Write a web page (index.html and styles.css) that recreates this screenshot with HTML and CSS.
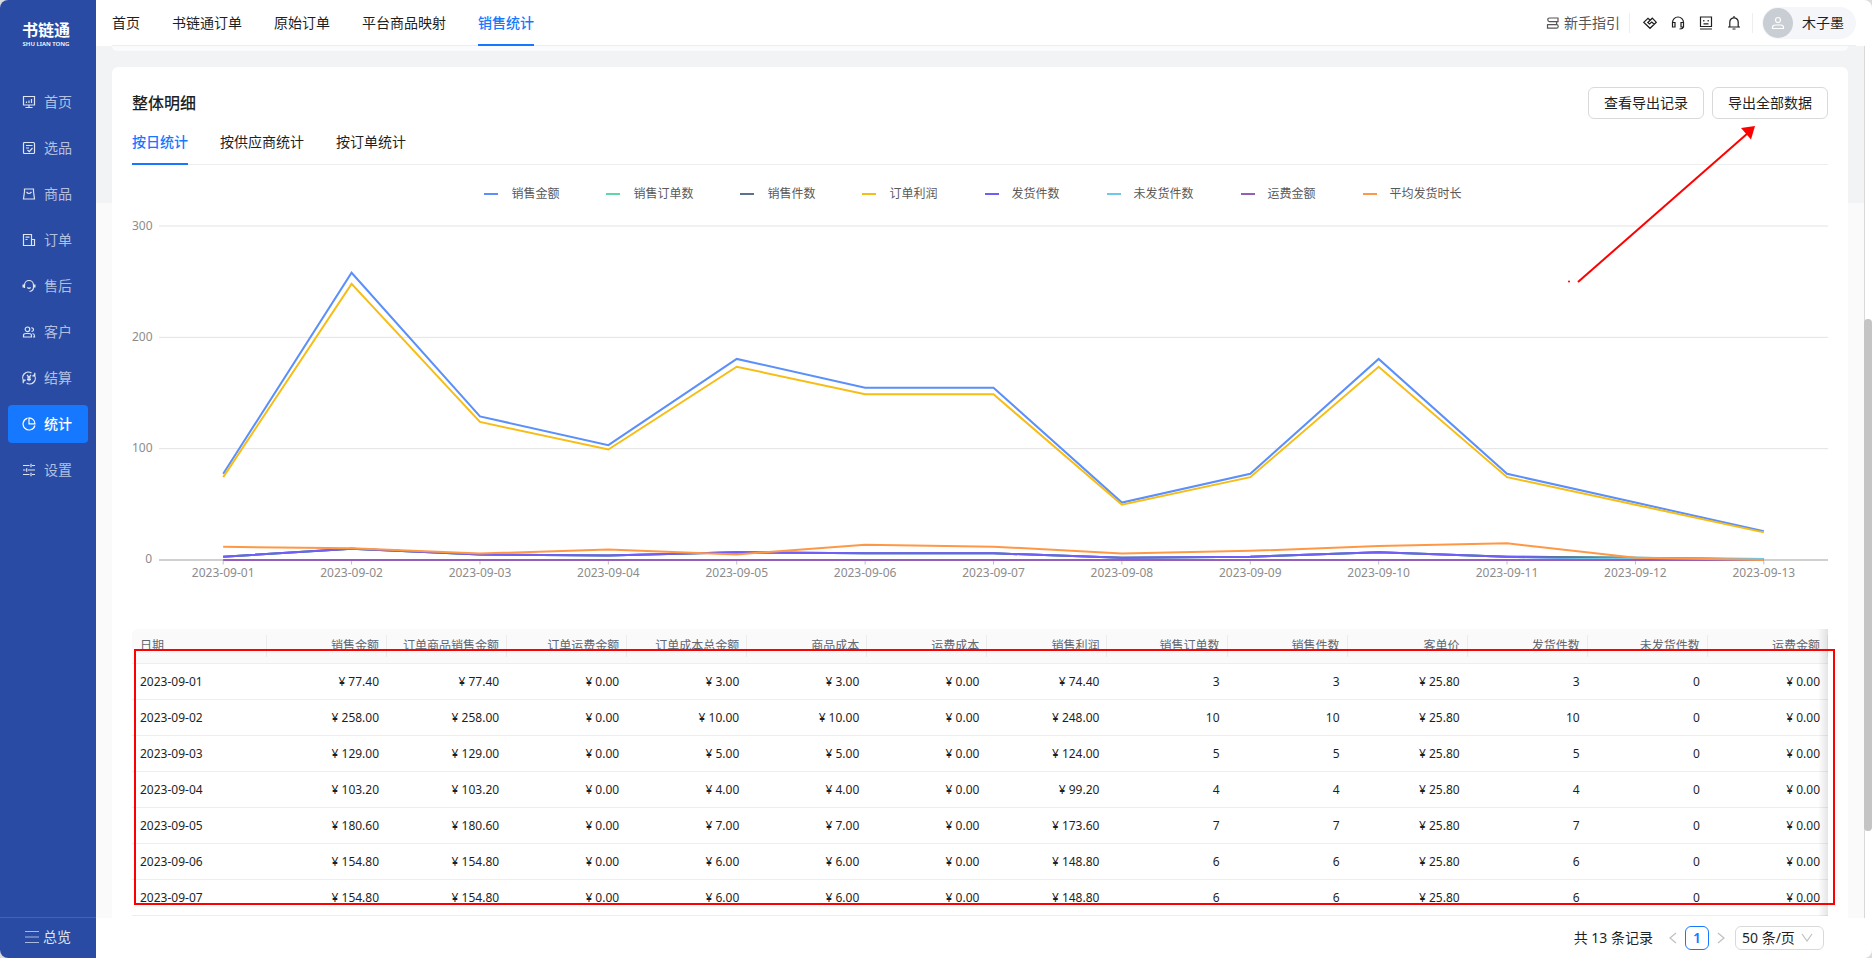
FILE: index.html
```html
<!DOCTYPE html>
<html lang="zh-CN">
<head>
<meta charset="utf-8">
<title>销售统计</title>
<link rel="stylesheet" href="styles.css">
</head>
<body>
<div class="app">
  <aside class="sidebar">
    <div class="logo">
      <strong class="logo-name">书链通</strong>
      <span class="logo-sub">SHU LIAN TONG</span>
    </div>
    <nav class="menu">
      <a class="menu-item" href="#"><svg class="icon" viewBox="0 0 14 14"><path d="M1.500 1.500h11v8.500h-11zM7 10v2.300M3.500 12.500h7M4.500 8V6.500M7 8V5.500M9.500 8V4"/></svg>首页</a>
      <a class="menu-item" href="#"><svg class="icon" viewBox="0 0 14 14"><rect x="1.500" y="1.500" width="11" height="11" rx="1"/><path d="M4 4.500h6.500M4 7h3M5.500 9l1.800 1.700L10.500 7"/></svg>选品</a>
      <a class="menu-item" href="#"><svg class="icon" viewBox="0 0 14 14"><path d="M2.500 2h9v2.500l1 7.500h-11l1-7.500zM4.500 5Q7 8 9.500 5"/></svg>商品</a>
      <a class="menu-item" href="#"><svg class="icon" viewBox="0 0 14 14"><path d="M1.500 1.500h8v11h-8zM9.500 6.500h3v6h-3M3.500 4.200h4M3.500 6.500h2"/></svg>订单</a>
      <a class="menu-item" href="#"><svg class="icon" viewBox="0 0 14 14"><path d="M2.500 9V6a4.500 4.500 0 0 1 9 0v2.500c0 2-1.500 3.500-4 4M5.300 8.500Q7 10 8.700 8.500"/><path class="thick" d="M1.500 5.500v3M12.500 5.500v3"/></svg>售后</a>
      <a class="menu-item" href="#"><svg class="icon" viewBox="0 0 14 14"><circle cx="5.500" cy="4.300" r="2.300"/><path d="M1.500 12v-1.500Q1.500 8.500 4 8.500h3q2.500 0 2.500 2V12zM9.300 3a1.700 1.700 0 1 1 .2 3.300M10.500 8.500q2 .3 2 2.500v1h-1.500"/></svg>客户</a>
      <a class="menu-item" href="#"><svg class="icon" viewBox="0 0 14 14"><path d="M2.300 10.500A5.600 5.600 0 0 1 9.500 2M11.700 3.500A5.600 5.600 0 0 1 4.500 12M12.800 1.800v3h-2.500M1.200 12.200v-3h2.500M5 4l2 2.300L9 4M7 6.300v4M5 7h4M5 8.700h4"/></svg>结算</a>
      <a class="menu-item active" href="#"><svg class="icon" viewBox="0 0 14 14"><path d="M5.500 1.200A6 6 0 1 0 12.900 8.500M7 .900a6 6 0 0 1 6 6H7z"/></svg>统计</a>
      <a class="menu-item" href="#"><svg class="icon" viewBox="0 0 14 14"><path d="M1 2.500h6.500M10 2.500h3M1 7h2.500M6 7h7M1 11.500h6.500M10 11.500h3M9 .800v3.400M4.700 5.300v3.400M9 9.800v3.400"/></svg>设置</a>
    </nav>
    <button class="overview" type="button"><svg class="icon" viewBox="0 0 14 14"><path d="M0 1.500h14M0 7h14M0 12.500h14"/></svg>总览</button>
  </aside>

  <div class="page">
    <header class="header">
      <nav class="topnav">
        <a href="#">首页</a>
        <a href="#">书链通订单</a>
        <a href="#">原始订单</a>
        <a href="#">平台商品映射</a>
        <a class="active" href="#">销售统计</a>
      </nav>
      <div class="tools">
        <a class="guide" href="#"><svg class="icon" viewBox="0 0 14 14"><path d="M12.500 2H3.500Q1.800 2 1.800 3.800T3.500 5.600H12V2M1.200 8.600H10.500Q12.200 8.600 12.200 10.400T10.500 12.200H1.500V8.600M10 5.600Q11.500 7 10 8.600"/></svg>新手指引</a>
        <span class="divider"></span>
        <div class="tool-icons">
          <button type="button" aria-label="合作"><svg class="icon" viewBox="0 0 14 14"><path d="M7.200 4.200L5 2.200.7 6.300 7 12.300l6.300-6L9.300 2.200 4.800 6.500l1.700 1.500 2.300-2 2.400 2.300"/></svg></button>
          <button type="button" aria-label="客服"><svg class="icon" viewBox="0 0 14 14"><path d="M1.500 8V6.500a5.500 5.500 0 0 1 11 0V10q0 3-4 3M1.500 6.500H4v4.500H1.500zM10 6.500h2.500V11H10z"/></svg></button>
          <button type="button" aria-label="机器人"><svg class="icon" viewBox="0 0 14 14"><path d="M1.500 1h11v9.500h-11zM1 13h12M4.800 4v1.500M9.200 4v1.500M4.500 7.800h5"/></svg></button>
          <button type="button" aria-label="通知"><svg class="icon" viewBox="0 0 14 14"><path d="M2.800 11V6a4.200 4.200 0 0 1 8.400 0v5M1 11h12M7 0v1.800M5.500 13h3"/></svg></button>
        </div>
        <span class="divider"></span>
        <button class="user" type="button">
          <span class="avatar"><svg class="icon" viewBox="0 0 14 14"><circle cx="7" cy="4" r="2.500"/><path d="M1.500 12.500v-1Q1.500 9 4.500 9h5q3 0 3 2.500v1z"/></svg></span>
          木子墨
        </button>
      </div>
    </header>

    <div class="body">
      <main class="content">
        <div class="card-tail"></div>
        <section class="card">
          <div class="card-head">
            <h2>整体明细</h2>
            <div class="actions">
              <button type="button">查看导出记录</button>
              <button type="button">导出全部数据</button>
            </div>
          </div>
          <nav class="tabs">
            <a class="active" href="#">按日统计</a>
            <a href="#">按供应商统计</a>
            <a href="#">按订单统计</a>
          </nav>

          <div class="legend">
            <span class="c-amount">销售金额</span>
            <span class="c-orders">销售订单数</span>
            <span class="c-pieces">销售件数</span>
            <span class="c-profit">订单利润</span>
            <span class="c-shipped">发货件数</span>
            <span class="c-unshipped">未发货件数</span>
            <span class="c-freight">运费金额</span>
            <span class="c-hours">平均发货时长</span>
          </div>

          <div class="chart">
            <div class="y-axis"><span>300</span><span>200</span><span>100</span><span>0</span></div>
            <svg class="plot" viewBox="0 0 1300 300" preserveAspectRatio="none">
              <path class="grid-line" d="M0 0H1300M0 100H1300M0 200H1300"/>
              <path class="base-line" d="M0 300H1300"/>
              <path class="tick" d="M50 300v4M150 300v4M250 300v4M350 300v4M450 300v4M550 300v4M650 300v4M750 300v4M850 300v4M950 300v4M1050 300v4M1150 300v4M1250 300v4"/>
              <polyline class="c-amount" points="50,222.6 150,42 250,171 350,196.8 450,119.4 550,145.2 650,145.2 750,248.4 850,222.6 950,119.4 1050,222.6 1150,248.4 1250,274.2"/>
              <polyline class="c-orders" points="50,297 150,290 250,295 350,296 450,293 550,294 650,294 750,298 850,297 950,293 1050,297 1150,298 1250,299"/>
              <polyline class="c-pieces" points="50,297 150,290 250,295 350,296 450,293 550,294 650,294 750,298 850,297 950,293 1050,297 1150,298 1250,299.500"/>
              <polyline class="c-profit" points="50,225.6 150,52 250,176 350,200.8 450,126.4 550,151.2 650,151.2 750,250.4 850,225.6 950,126.4 1050,225.6 1150,250.4 1250,275.2"/>
              <polyline class="c-shipped" points="50,297 150,290 250,295 350,296 450,293 550,294 650,294 750,298 850,297 950,293 1050,297 1150,300 1250,300"/>
              <polyline class="c-unshipped" points="50,300 1050,300 1150,298.500 1250,299"/>
              <polyline class="c-freight" points="50,300 1250,300"/>
              <polyline class="c-hours" points="50,288.200 150,289.500 250,294.200 350,290.500 450,295 550,286.200 650,288 750,294.200 850,291.800 950,287.500 1050,285 1150,298 1250,300"/>
            </svg>
            <div class="x-axis">
              <span>2023-09-01</span><span>2023-09-02</span><span>2023-09-03</span><span>2023-09-04</span><span>2023-09-05</span><span>2023-09-06</span><span>2023-09-07</span><span>2023-09-08</span><span>2023-09-09</span><span>2023-09-10</span><span>2023-09-11</span><span>2023-09-12</span><span>2023-09-13</span>
            </div>
          </div>

          <div class="table-wrap">
            <table>
              <thead>
                <tr><th>日期</th><th>销售金额</th><th>订单商品销售金额</th><th>订单运费金额</th><th>订单成本总金额</th><th>商品成本</th><th>运费成本</th><th>销售利润</th><th>销售订单数</th><th>销售件数</th><th>客单价</th><th>发货件数</th><th>未发货件数</th><th>运费金额</th></tr>
              </thead>
              <tbody>
                <tr><td>2023-09-01</td><td>¥ 77.40</td><td>¥ 77.40</td><td>¥ 0.00</td><td>¥ 3.00</td><td>¥ 3.00</td><td>¥ 0.00</td><td>¥ 74.40</td><td>3</td><td>3</td><td>¥ 25.80</td><td>3</td><td>0</td><td>¥ 0.00</td></tr>
                <tr><td>2023-09-02</td><td>¥ 258.00</td><td>¥ 258.00</td><td>¥ 0.00</td><td>¥ 10.00</td><td>¥ 10.00</td><td>¥ 0.00</td><td>¥ 248.00</td><td>10</td><td>10</td><td>¥ 25.80</td><td>10</td><td>0</td><td>¥ 0.00</td></tr>
                <tr><td>2023-09-03</td><td>¥ 129.00</td><td>¥ 129.00</td><td>¥ 0.00</td><td>¥ 5.00</td><td>¥ 5.00</td><td>¥ 0.00</td><td>¥ 124.00</td><td>5</td><td>5</td><td>¥ 25.80</td><td>5</td><td>0</td><td>¥ 0.00</td></tr>
                <tr><td>2023-09-04</td><td>¥ 103.20</td><td>¥ 103.20</td><td>¥ 0.00</td><td>¥ 4.00</td><td>¥ 4.00</td><td>¥ 0.00</td><td>¥ 99.20</td><td>4</td><td>4</td><td>¥ 25.80</td><td>4</td><td>0</td><td>¥ 0.00</td></tr>
                <tr><td>2023-09-05</td><td>¥ 180.60</td><td>¥ 180.60</td><td>¥ 0.00</td><td>¥ 7.00</td><td>¥ 7.00</td><td>¥ 0.00</td><td>¥ 173.60</td><td>7</td><td>7</td><td>¥ 25.80</td><td>7</td><td>0</td><td>¥ 0.00</td></tr>
                <tr><td>2023-09-06</td><td>¥ 154.80</td><td>¥ 154.80</td><td>¥ 0.00</td><td>¥ 6.00</td><td>¥ 6.00</td><td>¥ 0.00</td><td>¥ 148.80</td><td>6</td><td>6</td><td>¥ 25.80</td><td>6</td><td>0</td><td>¥ 0.00</td></tr>
                <tr><td>2023-09-07</td><td>¥ 154.80</td><td>¥ 154.80</td><td>¥ 0.00</td><td>¥ 6.00</td><td>¥ 6.00</td><td>¥ 0.00</td><td>¥ 148.80</td><td>6</td><td>6</td><td>¥ 25.80</td><td>6</td><td>0</td><td>¥ 0.00</td></tr>
              </tbody>
            </table>
            <div class="table-mark"></div>
          </div>

          <svg class="arrow-mark" viewBox="0 0 192 162"><path class="arrow-line" d="M12 158L182 9"/><path class="arrow-head" d="M189 2l-14 2 10 11.500z"/><circle class="arrow-head" cx="3" cy="157.500" r="1"/></svg>
        </section>
      </main>
      <div class="scrollbar"><span></span></div>
    </div>

    <footer class="pager">
      <span class="total">共 13 条记录</span>
      <button class="step" type="button" aria-label="上一页"><svg class="icon" viewBox="0 0 10 12"><path d="M8 1L2 6l6 5"/></svg></button>
      <button class="current" type="button">1</button>
      <button class="step" type="button" aria-label="下一页"><svg class="icon" viewBox="0 0 10 12"><path d="M2 1l6 5-6 5"/></svg></button>
      <span class="size">
        <select aria-label="每页条数"><option>50 条/页</option></select>
        <svg class="icon" viewBox="0 0 12 10"><path d="M1 1l5 7 5-7"/></svg>
      </span>
    </footer>
  </div>
</div>
</body>
</html>
```

FILE: styles.css
```css
* { box-sizing: border-box; }

body {
  margin: 0;
  background: #dcdcdc;
  color: #1f1f1f;
  font: 14px/22px "Noto Sans", "Noto Sans CJK SC", sans-serif;
}

a { color: inherit; text-decoration: none; }

button {
  margin: 0;
  padding: 0;
  border: 0;
  background: none;
  color: inherit;
  font: inherit;
}

.icon {
  width: 14px;
  height: 14px;
  flex: none;
  fill: none;
  stroke: currentColor;
  stroke-width: 1.2;
}

.icon .thick { stroke-width: 2; }

.app {
  display: flex;
  height: 100vh;
  overflow: hidden;
  border-radius: 8px;
  background: #fff;
}

/* Sidebar */
.sidebar {
  display: flex;
  flex: none;
  flex-direction: column;
  width: 96px;
  background: #294ba3;
  color: #b3c0e0;
}

.logo {
  display: flex;
  flex-direction: column;
  align-items: center;
  height: 83px;
  padding: 20px 4px 0 0;
  color: #fff;
}

.logo-name { font-size: 16px; line-height: 20px; }
.logo-sub { font-size: 6px; line-height: 8px; font-weight: 600; white-space: nowrap; }

.menu {
  display: flex;
  flex: 1;
  flex-direction: column;
  gap: 8px;
  padding: 0 8px;
}

.menu-item {
  display: flex;
  align-items: center;
  gap: 8px;
  height: 38px;
  padding-left: 14px;
  border-radius: 4px;
}

.menu-item .icon { color: #dfe4f1; }
.menu-item.active { background: #1677ff; color: #fff; font-weight: 500; }
.menu-item.active .icon { color: #fff; }

.overview {
  display: flex;
  align-items: center;
  justify-content: center;
  gap: 4px;
  height: 41px;
  padding-bottom: 2px;
  border-top: 1px solid #4563b0;
  color: #dfe4f1;
}

.overview .icon { color: #a9b7db; }

/* Header */
.page {
  display: flex;
  flex: 1;
  flex-direction: column;
  min-width: 0;
}

.header {
  display: flex;
  flex: none;
  justify-content: space-between;
  height: 46px;
  margin: 0 16px;
  border-bottom: 1px solid #eee;
}

.topnav { display: flex; gap: 32px; height: 46px; }
.topnav a { height: 46px; line-height: 46px; }
.topnav .active { border-bottom: 2px solid #1677ff; color: #1677ff; font-weight: 500; }

.tools { display: flex; align-items: center; }
.guide { display: flex; align-items: center; gap: 4px; color: #555; }
.divider { width: 1px; height: 20px; margin: 0 9px; background: #eee; }
.tool-icons { display: flex; gap: 14px; padding: 0 2px 0 4px; }
.tool-icons button { display: flex; }

.user {
  display: flex;
  align-items: center;
  gap: 9px;
  height: 32px;
  padding: 0 12px 0 1px;
  border-radius: 16px;
  background: #f5f6f9;
}

.avatar {
  display: flex;
  align-items: center;
  justify-content: center;
  width: 30px;
  height: 30px;
  border-radius: 50%;
  background: #c9cdd4;
  color: #fff;
}

/* Scrolling area */
.body { display: flex; flex: 1; min-height: 0; }

.content {
  flex: 1;
  min-width: 0;
  overflow: hidden;
  padding: 0 16px;
  background: linear-gradient(#f2f3f5 157px, #fafafa 157px);
}

.card-tail {
  height: 5px;
  margin-bottom: 16px;
  border-radius: 0 0 6px 6px;
  background: #fafbfc;
}

.card {
  position: relative;
  padding: 20px 20px 8px;
  border-radius: 6px;
  background: #fff;
}

.scrollbar {
  display: grid;
  flex: none;
  grid-template-rows: 273fr 512fr 87fr;
  width: 8px;
  border-left: 1px solid #d9d9d9;
  background: #fff;
}

.scrollbar span { grid-row: 2; margin-left: -1px; border-radius: 4px; background: #c4c4c4; }

.card-head { display: flex; align-items: center; justify-content: space-between; }
.card-head h2 { margin: 0; font-size: 16px; line-height: 32px; font-weight: 500; }
.actions { display: flex; gap: 8px; }

.actions button {
  height: 32px;
  padding: 0 15px;
  border: 1px solid #d9d9d9;
  border-radius: 6px;
  background: #fff;
}

.tabs { display: flex; gap: 32px; height: 46px; border-bottom: 1px solid #eee; }
.tabs a { height: 46px; line-height: 46px; }
.tabs .active { border-bottom: 2px solid #1677ff; color: #1677ff; font-weight: 500; }

/* Chart */
.c-amount { --series: #5b8ff9; }
.c-orders { --series: #5ad8a6; }
.c-pieces { --series: #5d7092; }
.c-profit { --series: #f6bd16; }
.c-shipped { --series: #6f5ef9; }
.c-unshipped { --series: #6dc8ec; }
.c-freight { --series: #945fb9; }
.c-hours { --series: #ff9845; }

.legend {
  display: flex;
  justify-content: center;
  gap: 47px;
  padding: 20px 14px 23px 0;
  color: #595959;
  font-size: 12px;
  line-height: 18px;
}

.legend span { display: flex; align-items: center; gap: 13px; }
.legend span::before { content: ""; width: 14px; height: 2px; background: var(--series); }

.chart {
  display: grid;
  grid-template-columns: 20px 1fr;
  column-gap: 7px;
  color: #8c8c8c;
  font-size: 12px;
  line-height: 18px;
}

.y-axis {
  display: flex;
  flex-direction: column;
  justify-content: space-between;
  margin: -9px 0 -8px;
  text-align: right;
}

.plot { display: block; width: 100%; height: 334px; overflow: visible; }
.plot * { fill: none; stroke-width: 2; vector-effect: non-scaling-stroke; }
.plot polyline { stroke: var(--series); }
.plot .grid-line { stroke: #e3e3e3; stroke-width: 1; }
.plot .base-line { stroke: #d0d0d0; }
.plot .tick { stroke: #bfbfbf; stroke-width: 1; }

.x-axis {
  display: grid;
  grid-column: 2;
  grid-template-columns: repeat(13, 1fr);
  padding-top: 4px;
  text-align: center;
}

/* Table */
.table-wrap { position: relative; margin-top: 47px; }

.table-wrap::after {
  content: "";
  position: absolute;
  inset: 0 0 0 auto;
  width: 10px;
  background: linear-gradient(to left, #0000001a, #0000);
}

table {
  width: 100%;
  table-layout: fixed;
  border-spacing: 0;
  font-size: 12px;
  line-height: 18px;
}

th, td {
  height: 36px;
  padding: 0 8px;
  border-bottom: 1px solid #eee;
  text-align: right;
  white-space: nowrap;
}

th {
  height: 35px;
  background: linear-gradient(#ececec, #ececec) right / 1px 22px no-repeat #fafafa;
  color: #606672;
  font-weight: 400;
}

th:first-child { width: 135px; border-top-left-radius: 6px; }
th:first-child, td:first-child { text-align: left; }

/* Annotations */
.table-mark {
  position: absolute;
  z-index: 1;
  top: 20px;
  left: 2px;
  right: -7px;
  height: 256px;
  border: 2px solid #f00;
}

.arrow-mark {
  position: absolute;
  top: 57px;
  right: 90px;
  width: 192px;
  height: 162px;
}

.arrow-line { stroke: #f00; stroke-width: 2; }
.arrow-head { fill: #f00; }

/* Pagination */
.pager {
  display: flex;
  flex: none;
  align-items: center;
  justify-content: flex-end;
  height: 40px;
  padding-right: 48px;
}

.total { margin-right: 8px; }
.step { display: flex; align-items: center; justify-content: center; width: 24px; height: 24px; color: #bfbfbf; }
.step .icon { width: 10px; height: 12px; }

.current {
  width: 24px;
  height: 24px;
  border: 1px solid #1677ff;
  border-radius: 6px;
  color: #1677ff;
  font-weight: 600;
}

.size { display: flex; position: relative; margin-left: 2px; }

.size select {
  appearance: none;
  width: 89px;
  height: 24px;
  padding: 0 6px;
  border: 1px solid #d9d9d9;
  border-radius: 6px;
  background: #fff;
  color: inherit;
  font: inherit;
  line-height: 22px;
}

.size .icon {
  position: absolute;
  top: 7px;
  right: 11px;
  width: 12px;
  height: 10px;
  color: #bfbfbf;
  pointer-events: none;
}
```
